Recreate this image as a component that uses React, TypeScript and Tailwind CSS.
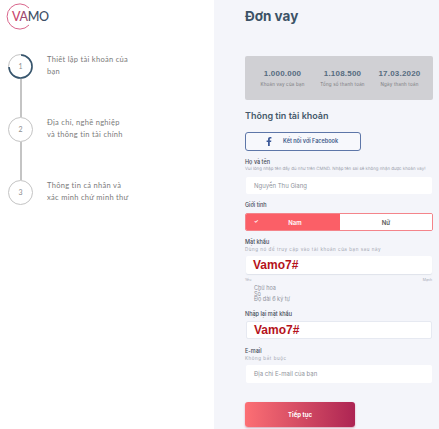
import React from 'react';

const steps = [
  { n: 1, text: ['Thiết lập tài khoản của', 'bạn'] },
  { n: 2, text: ['Địa chỉ, nghề nghiệp', 'và thông tin tài chính'] },
  { n: 3, text: ['Thông tin cá nhân và', 'xác minh chứ minh thư'] },
];

const summary = [
  { value: '1.000.000', label: 'Khoản vay của bạn' },
  { value: '1.108.500', label: 'Tổng số thanh toán' },
  { value: '17.03.2020', label: 'Ngày thanh toán' },
];

const Label: React.FC<{ children: React.ReactNode }> = ({ children }) => (
  <div className="text-[5.5px] leading-[8px] font-medium text-[#444a57]">{children}</div>
);

const Hint: React.FC<{ children: React.ReactNode }> = ({ children }) => (
  <div className="mt-[1px] text-[4.5px] leading-[6px] tracking-[0.55px] whitespace-nowrap text-[#a0a4af]">{children}</div>
);

const Logo = () => (
  <div className="relative h-[26px] w-[50px]">
    <svg width="27" height="27" viewBox="0 0 27 27" className="absolute left-[6px] top-[3px]" fill="none">
      <path d="M23 5A12.6 12.6 0 1 0 23 22" stroke="#d9668c" strokeWidth="1" />
    </svg>
    <span className="absolute left-[12px] top-[9px] text-[12.5px] leading-[15px] font-medium tracking-[-0.3px] text-[#3d4f66]">
      <span className="text-[#c9476f]">V</span>
      <span className="text-[#a04a70]">A</span>MO
    </span>
  </div>
);

const StepCircle: React.FC<{ n: number; active: boolean }> = ({ n, active }) => (
  <div className="relative flex h-[25px] w-[25px] shrink-0 items-center justify-center rounded-full border-[1.5px] border-[#c4c4c4] bg-white text-[7px] text-[#8d8d8d]">
    {active && (
      <svg width="25" height="25" viewBox="0 0 25 25" className="absolute -left-[1.5px] -top-[1.5px]" fill="none">
        <path d="M13 1A11.5 11.5 0 1 1 1 13" stroke="#37566e" strokeWidth="1.6" />
      </svg>
    )}
    {n}
  </div>
);

const Stepper = () => (
  <div className="mt-[28px] ml-[8px] flex flex-col">
    {steps.map((s, i) => (
      <div key={s.n} className="flex">
        <div className="flex w-[25px] flex-col items-center">
          <StepCircle n={s.n} active={i === 0} />
          {i < 2 && <div className="h-[38px] w-[2px] bg-[#c4c4c4]" />}
        </div>
        <div className="ml-[14px] text-[7.5px] leading-[11.5px] tracking-[0.3px] text-[#7a7a7a]">
          {s.text.map(line => (
            <div key={line}>{line}</div>
          ))}
        </div>
      </div>
    ))}
  </div>
);

export default function App() {
  return (
    <div className="flex h-[429px] w-[439px] overflow-hidden bg-white font-['Lato',sans-serif] antialiased">
      <aside className="w-[214px] shrink-0 bg-white">
        <Logo />
        <Stepper />
      </aside>

      <main className="flex-1 bg-[#f4f5fa] pl-[31px] pr-[6px] font-['Inter',sans-serif]">
        <h1 className="mt-[7px] text-[13.5px] leading-[18px] font-bold text-[#3b5266]">Đơn vay</h1>

        <div className="mt-[31px] grid h-[44px] w-[188px] grid-cols-[55px_55px_49px] items-center gap-x-[5px] rounded-[2px] bg-[#d0d0d4] pl-[10px]">
          {summary.map(s => (
            <div key={s.label} className="text-center">
              <div className="font-['Liberation_Sans',sans-serif] text-[8px] leading-[10px] font-bold tracking-[0.2px] text-[#566c80]">{s.value}</div>
              <div className="mt-[3px] text-[4.5px] leading-[6px] tracking-[0.2px] whitespace-nowrap text-[#7b7b80]">{s.label}</div>
            </div>
          ))}
        </div>

        <h2 className="mt-[10px] text-[9px] leading-[12px] font-semibold text-[#46596b]">Thông tin tài khoản</h2>

        <button className="mt-[10px] flex h-[19px] w-[116px] items-center rounded-[3px] border border-[#5d76a8] bg-[#f7f8fc] pl-[20px]">
          <svg width="6" height="9" viewBox="0 0 320 512" fill="#3b5998">
            <path d="M279.14 288l14.22-92.66h-88.91v-60.13c0-25.35 12.42-50.06 52.24-50.06h40.42V6.26S260.43 0 225.36 0c-73.22 0-121.08 44.38-121.08 124.72v70.62H22.89V288h81.39v224h100.17V288z" />
          </svg>
          <span className="ml-[11px] text-[5.5px] font-semibold text-[#3f5a8a]">Kết nối với Facebook</span>
        </button>

        <div className="mt-[7px]">
          <Label>Họ và tên</Label>
          <div className="mt-[1px] w-[188px] text-[4.4px] leading-[6px] whitespace-nowrap text-[#a0a4af] [text-rendering:geometricPrecision]">
            Vui lòng nhập tên đầy đủ như trên CMND. Nhập tên sai sẽ không nhận được khoản vay!
          </div>
          <div className="mt-[4px] ml-[1px] flex h-[17px] w-[186px] items-center rounded-[2px] bg-white pl-[8px] text-[6px] text-[#8f939c]">
            Nguyễn Thu Giang
          </div>
        </div>

        <div className="mt-[7px]">
          <Label>Giới tính</Label>
          <div className="mt-[4px] flex h-[18px] w-[188px] overflow-hidden rounded-[2px] border border-[#f4848a] text-[6px] font-semibold">
            <div className="relative flex w-[94px] items-center justify-center bg-[#fb5f67] pl-[4px] text-white">
              <span className="absolute left-[8px] text-[5px]">✓</span>
              Nam
            </div>
            <div className="flex flex-1 items-center justify-center bg-white text-[#555]">Nữ</div>
          </div>
        </div>

        <div className="mt-[7px]">
          <Label>Mật khẩu</Label>
          <Hint>Dùng nó để truy cập vào tài khoản của bạn sau này</Hint>
          <div className="mt-[3px] ml-[1px] flex h-[18px] w-[186px] items-center rounded-[2px] bg-white pl-[7px] font-['Liberation_Sans',sans-serif] text-[12px] font-bold text-[#b5121b] shadow-[0_1px_1px_#dfe3ea]">
            Vamo7#
          </div>
          <div className="mt-[4px] flex w-[187px] justify-between text-[3.5px] leading-[5px] text-[#a5a9b3]">
            <span>Yếu</span>
            <span>Mạnh</span>
          </div>
          <ul className="mt-[3px] ml-[9px] text-[5.5px] leading-[5.5px] text-[#8f939c]">
            <li>Chữ hoa</li>
            <li>Số</li>
            <li>Độ dài 6 ký tự</li>
          </ul>
        </div>

        <div className="mt-[7px]">
          <Label>Nhập lại mật khẩu</Label>
          <div className="mt-[3.5px] ml-[1px] flex h-[18px] w-[186px] items-center rounded-[2px] border border-[#e6e9f1] bg-white pl-[7px] font-['Liberation_Sans',sans-serif] text-[12px] font-bold text-[#b5121b]">
            Vamo7#
          </div>
        </div>

        <div className="mt-[7.5px]">
          <Label>E-mail</Label>
          <Hint>Không bắt buộc</Hint>
          <div className="mt-[3px] ml-[1px] flex h-[18px] w-[186px] items-center rounded-[2px] bg-white pl-[8px] text-[6px] text-[#8f939c]">
            Địa chỉ E-mail của bạn
          </div>
        </div>

        <button className="mt-[19px] flex h-[25px] w-[110px] items-center justify-center rounded-[3px] bg-gradient-to-r from-[#fc6f74] to-[#ad2453] text-[6px] font-bold text-white shadow-[0_1px_2px_#d9a5b5]">
          Tiếp tục
        </button>
      </main>
    </div>
  );
}
